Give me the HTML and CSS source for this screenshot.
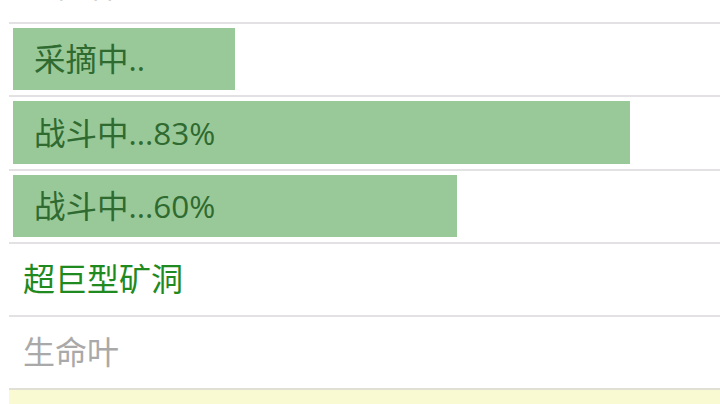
FILE: index.html
```html
<!DOCTYPE html>
<html lang="zh">
<head>
<meta charset="utf-8">
<link rel="stylesheet" href="styles.css">
</head>
<body>
<div class="list">
  <div class="row row-top"><span class="label label-dark">小树林</span></div>
  <div class="row"><div class="bar" style="width:222px"><span class="bar-text">采摘中..</span></div></div>
  <div class="row row-tall"><div class="bar" style="width:617px"><span class="bar-text">战斗中...83%</span></div></div>
  <div class="row"><div class="bar" style="width:444px"><span class="bar-text">战斗中...60%</span></div></div>
  <div class="row"><span class="label label-green">超巨型矿洞</span></div>
  <div class="row"><span class="label label-gray">生命叶</span></div>
  <div class="row row-yellow"></div>
</div>
</body>
</html>
```
FILE: styles.css
```css
html, body {
  margin: 0;
  padding: 0;
  background: #ffffff;
  overflow: hidden;
}
body {
  font-family: "Open Sans", "Noto Sans CJK SC", sans-serif;
  width: 720px;
  height: 404px;
}
.list {
  padding-left: 9px;
  display: flex;
  flex-direction: column;
}
.row {
  box-sizing: border-box;
  height: 73px;
  border-top: 2px solid #e3e1e3;
  padding: 4px 0 5px 4px;
  display: flex;
  align-items: stretch;
}
.row-tall {
  height: 74px;
}
.row-top {
  margin-top: -52px;
  border-top: none;
  height: 74px;
}
.bar {
  background: #99c999;
  display: flex;
  align-items: center;
  padding-left: 21px;
  box-sizing: border-box;
  flex: none;
}
.bar-text {
  font-size: 31.5px;
  line-height: 1;
  color: #2f6a30;
  white-space: nowrap;
}
.label {
  font-size: 32px;
  line-height: 1;
  align-self: center;
  padding-left: 10px;
  white-space: nowrap;
}
.label-green {
  color: #1f8a1f;
}
.label-gray {
  color: #a9a9a9;
}
.label-dark {
  color: #444444;
}
.row-yellow {
  background: #fafad2;
  border-top: 2px solid #e1e0d6;
}
```
